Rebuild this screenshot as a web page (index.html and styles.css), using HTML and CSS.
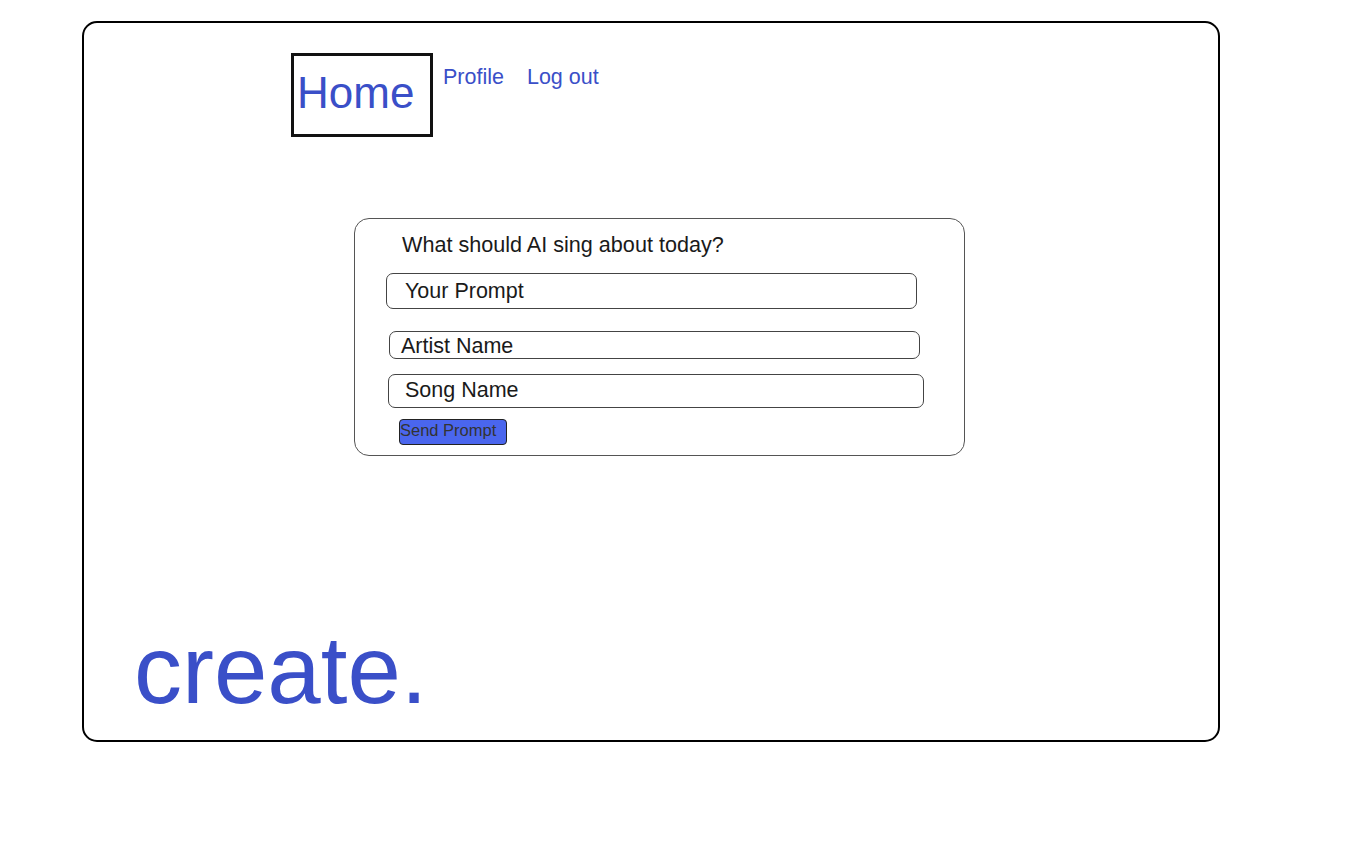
FILE: index.html
```html
<!DOCTYPE html>
<html lang="en">
<head>
<meta charset="utf-8">
<title>create.</title>
<link rel="stylesheet" href="styles.css">
</head>
<body>
<div class="frame">
  <nav class="nav">
    <a class="home" href="#">Home</a>
    <a class="link" href="#">Profile</a>
    <a class="link logout" href="#">Log out</a>
  </nav>
  <section class="card">
    <div class="title">What should AI sing about today?</div>
    <div class="field f1">Your Prompt</div>
    <div class="field f2">Artist Name</div>
    <div class="field f3">Song Name</div>
    <div class="btn">Send Prompt</div>
  </section>
  <div class="brand">create.</div>
</div>
</body>
</html>
```

FILE: styles.css
```css
* { box-sizing: border-box; }
html, body { margin: 0; padding: 0; background: #fff; }
body {
  font-family: "Liberation Sans", Arial, sans-serif;
  padding: 21px 0 0 82px;
}
.frame {
  width: 1138px;
  height: 721px;
  border: 2px solid #000;
  border-radius: 15px;
  display: flex;
  flex-direction: column;
  padding: 0 0 22px 0;
}
.nav {
  display: flex;
  align-items: flex-start;
  margin: 30px 0 0 207px;
}
.home {
  width: 142px;
  height: 84px;
  border: 3px solid #111;
  color: #3a4fc8;
  text-decoration: none;
  font-size: 44px;
  line-height: 48px;
  padding: 13px 0 0 3px;
}
.link {
  color: #3a4fc8;
  text-decoration: none;
  font-size: 21.5px;
  line-height: 24px;
  margin: 12px 0 0 10px;
}
.logout { margin-left: 23px; }
.card {
  margin: 81px 0 0 270px;
  width: 611px;
  height: 238px;
  border: 1px solid #555;
  border-radius: 15px;
  padding: 14px 0 0 31px;
  display: flex;
  flex-direction: column;
  align-items: flex-start;
  color: #1a1a1a;
}
.title {
  font-size: 21.6px;
  line-height: 24px;
  margin-left: 16px;
}
.field {
  border: 1px solid #444;
  border-radius: 7px;
  font-size: 21.5px;
  line-height: 24px;
  display: flex;
  align-items: center;
}
.f1 { margin-top: 16px; width: 531px; height: 36px; padding-left: 18px; }
.f2 { margin: 22px 0 0 3px; width: 531px; height: 28px; padding-left: 11px; padding-top: 2px; }
.f3 { margin: 15px 0 0 2px; width: 536px; height: 34px; padding-left: 16px; padding-bottom: 3px; }
.btn {
  margin: 11px 0 0 13px;
  width: 108px;
  height: 26px;
  background: #4a66ee;
  border: 1px solid #222;
  border-radius: 4px;
  color: #333;
  font-size: 16.5px;
  line-height: 20px;
  white-space: nowrap;
}
.brand {
  margin-top: auto;
  margin-left: 50px;
  font-size: 96px;
  line-height: 96px;
  color: #3a4fc8;
}
```
